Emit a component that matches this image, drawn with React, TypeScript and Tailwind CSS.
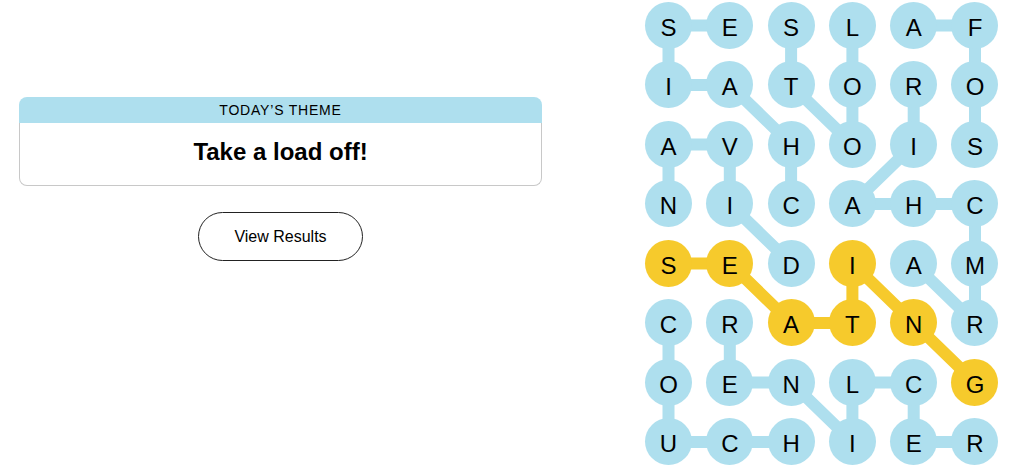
import React from "react";

const letters = [
  "SESLAF",
  "IATORO",
  "AVHOIS",
  "NICAHC",
  "SEDIAM",
  "CRATNR",
  "OENLCG",
  "UCHIER",
];

const BLUE = "#aedfee";
const YELLOW = "#f6ca2c";

const spangram = [
  [4, 0],
  [4, 1],
  [5, 2],
  [5, 3],
  [4, 3],
  [5, 4],
  [6, 5],
];

// words as paths of [row, col]
const words: number[][][] = [
  [[3, 2], [2, 2], [1, 1], [1, 0], [0, 0], [0, 1]], // chaise
  [[0, 2], [1, 2], [2, 3], [1, 3], [0, 3]], // stool
  [[2, 5], [1, 5], [0, 5], [0, 4]], // sofa
  [[4, 4], [5, 5], [4, 5], [3, 5], [3, 4], [3, 3], [2, 4], [1, 4]], // armchair
  [[4, 2], [3, 1], [2, 1], [2, 0], [3, 0]], // divan
  [[5, 0], [6, 0], [7, 0], [7, 1], [7, 2]], // couch
  [[7, 5], [7, 4], [6, 4], [6, 3], [7, 3], [6, 2], [6, 1], [5, 1]], // recliner
];

const CELL = 47;
const COL_STEP = 61.3;
const ROW_STEP = 59.5;

const cx = (c: number) => CELL / 2 + c * COL_STEP;
const cy = (r: number) => CELL / 2 + r * ROW_STEP;

const isSpan = (r: number, c: number) => spangram.some(([a, b]) => a === r && b === c);

const toPoints = (path: number[][]) => path.map(([r, c]) => `${cx(c)},${cy(r)}`).join(" ");

const Board = () => {
  const w = CELL + 5 * COL_STEP;
  const h = CELL + 7 * ROW_STEP;
  return (
    <div className="relative">
      <svg className="absolute left-0 top-0 pointer-events-none" width={w} height={h}>
        {words.map((p, i) => (
          <polyline key={i} points={toPoints(p)} fill="none" stroke={BLUE} strokeWidth={12} strokeLinejoin="round" />
        ))}
        <polyline points={toPoints(spangram)} fill="none" stroke={YELLOW} strokeWidth={12} strokeLinejoin="round" />
      </svg>
      <div className="relative grid grid-cols-[repeat(6,47px)] grid-rows-[repeat(8,47px)] gap-x-[14.3px] gap-y-[12.5px]">
        {letters.map((row, r) =>
          row.split("").map((ch, c) => (
            <div
              key={`${r}-${c}`}
              className={`w-[47px] h-[47px] rounded-full flex items-center justify-center pt-[5px] text-[24px] leading-none text-black ${
                isSpan(r, c) ? "bg-[#f6ca2c]" : "bg-[#aedfee]"
              }`}
            >
              {ch}
            </div>
          ))
        )}
      </div>
    </div>
  );
};

export default function App() {
  return (
    <div
      className="flex w-[1009px] h-[470px] bg-white overflow-hidden text-black"
      style={{ fontFamily: '"Liberation Sans", Arial, sans-serif' }}
    >
      <div className="w-[561px] shrink-0 px-[19px] pt-[97px] flex flex-col items-center">
        <div className="w-full">
          <div className="h-[26px] bg-[#aedfee] rounded-t-[8px] flex items-center justify-center text-[14px] tracking-[0.8px] uppercase">
            Today’s Theme
          </div>
          <div className="h-[63px] border-x border-b border-[#c8c8c8] rounded-b-[8px] flex items-center justify-center pb-[4px]">
            <h2 className="text-[24px] font-bold">Take a load off!</h2>
          </div>
        </div>
        <button className="mt-[26px] w-[165px] h-[49px] rounded-full border border-[#222] text-[16px] bg-white">
          View Results
        </button>
      </div>
      <div className="ml-[84px] pt-[1.5px]">
        <Board />
      </div>
    </div>
  );
}
